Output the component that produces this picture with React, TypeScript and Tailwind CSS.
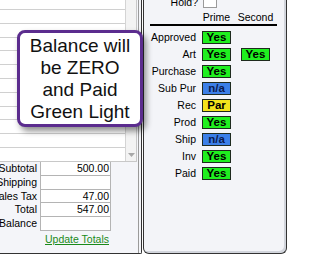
import React from 'react';

type Status = 'yes' | 'na' | 'par';

interface StatusRow {
  label: string;
  prime: Status;
  second?: Status;
}

const ROWS: StatusRow[] = [
  { label: 'Approved', prime: 'yes' },
  { label: 'Art', prime: 'yes', second: 'yes' },
  { label: 'Purchase', prime: 'yes' },
  { label: 'Sub Pur', prime: 'na' },
  { label: 'Rec', prime: 'par' },
  { label: 'Prod', prime: 'yes' },
  { label: 'Ship', prime: 'na' },
  { label: 'Inv', prime: 'yes' },
  { label: 'Paid', prime: 'yes' },
];

const TOTALS: { label: string; value: string }[] = [
  { label: 'Subtotal', value: '500.00' },
  { label: 'Shipping', value: '' },
  { label: 'Sales Tax', value: '47.00' },
  { label: 'Total', value: '547.00' },
  { label: 'Balance', value: '' },
];

const FONT = { fontFamily: '"Liberation Sans", Arial, sans-serif' };

function Badge({ status }: { status: Status }) {
  const text = status === 'yes' ? 'Yes' : status === 'na' ? 'n/a' : 'Par';
  const cls =
    status === 'yes'
      ? 'bg-[#1ff01f] text-black'
      : status === 'na'
        ? 'bg-[#3c7fe8] text-[#0b1a4e]'
        : 'bg-[#f4e41c] text-black';
  return (
    <div
      className={`w-[29px] h-[13px] border border-[#1e2a1e] flex items-center justify-center text-[11.5px] font-bold leading-none ${cls}`}
    >
      {text}
    </div>
  );
}

export default function App() {
  return (
    <div className="relative w-[320px] h-[259px] overflow-hidden bg-white text-black" style={FONT}>
      <div className="flex h-[254px]">
        {/* Left panel: line items + totals */}
        <div className="w-[142px] h-full bg-[#f4f5f9] border-r border-b border-[#333] rounded-br-[2px] flex flex-col">
          <div className="h-full border-r border-[#9a9a9a] mr-[2px] flex flex-col">
            {/* grid */}
            <div className="h-[162px] w-[137px] bg-white border-r border-b border-[#c8c8c8] flex overflow-hidden">
              <div className="w-[125px] flex flex-col -mt-[3.8px]">
                {Array.from({ length: 12 }).map((_, i) => (
                  <div key={i} className="h-[13.8px] shrink-0 border-b border-[#d0d0d0]" />
                ))}
              </div>
              <div className="w-[11px] border-l border-[#d4d4d4] bg-[#f3f3f3] flex flex-col justify-end items-center pb-[4px]">
                <svg width="7" height="4" viewBox="0 0 7 4">
                  <path d="M0 0 L7 0 L3.5 4 Z" fill="#a8a8a8" />
                </svg>
              </div>
            </div>

            {/* totals */}
            <div className="flex flex-col">
              {TOTALS.map((t) => (
                <div key={t.label} className="flex h-[13.8px]">
                  <div className="w-[38px] pr-[1px] text-right text-[10.5px] leading-[13.8px] whitespace-nowrap flex justify-end">
                    {t.label}
                  </div>
                  <div className="w-[71px] ml-[2px] border-x border-b border-[#b4b4b4] bg-white text-right pr-[1px] text-[10.5px] leading-[12.8px]">
                    {t.value}
                  </div>
                </div>
              ))}
              <div className="flex pl-[45px] pt-[2px]">
                <span className="text-[10.5px] text-[#1a8a1a] underline leading-[13px]">Update Totals</span>
              </div>
            </div>
          </div>
        </div>

        {/* Right panel: status lights */}
        <div className="w-[144px] h-full ml-[1px] bg-[#f3f4f8] border-x border-b border-[#333] rounded-b-[6px] shadow-[inset_-2px_-2px_0_#d2d5dc] text-[10.5px]">
          <div className="flex items-center h-[14px] -mt-[6px]">
            <div className="w-[54px] text-right pt-[4px]">Hold?</div>
            <div className="ml-[5px] w-[14px] h-[14px] bg-white border border-[#9a9a9a]" />
          </div>
          <div className="flex items-center h-[14px] mt-[4px] ml-[6px] mr-[9px] border-b-2 border-black">
            <div className="w-[47px]" />
            <div className="ml-[5px] w-[29px] text-center">Prime</div>
            <div className="ml-[10px] w-[29px] flex justify-center whitespace-nowrap">Second</div>
          </div>
          <div className="flex flex-col mt-[3px]">
            {ROWS.map((r) => (
              <div key={r.label} className="flex items-center h-[17px]">
                <div className="w-[53px] text-right pr-[1px]">{r.label}</div>
                <div className="ml-[5px]">
                  <Badge status={r.prime} />
                </div>
                {r.second && (
                  <div className="ml-[10px]">
                    <Badge status={r.second} />
                  </div>
                )}
              </div>
            ))}
          </div>
        </div>
      </div>

      {/* Callout */}
      <div className="absolute left-[17px] top-[30px] w-[126px] h-[97px] bg-white border-[3px] border-[#5b2c8e] rounded-[8px] shadow-[3px_4px_6px_rgba(0,0,0,0.45)] flex items-center justify-center">
        <div className="text-center text-[19px] leading-[22px] text-[#111]">
          Balance will
          <br />
          be ZERO
          <br />
          and Paid
          <br />
          Green Light
        </div>
      </div>
    </div>
  );
}
